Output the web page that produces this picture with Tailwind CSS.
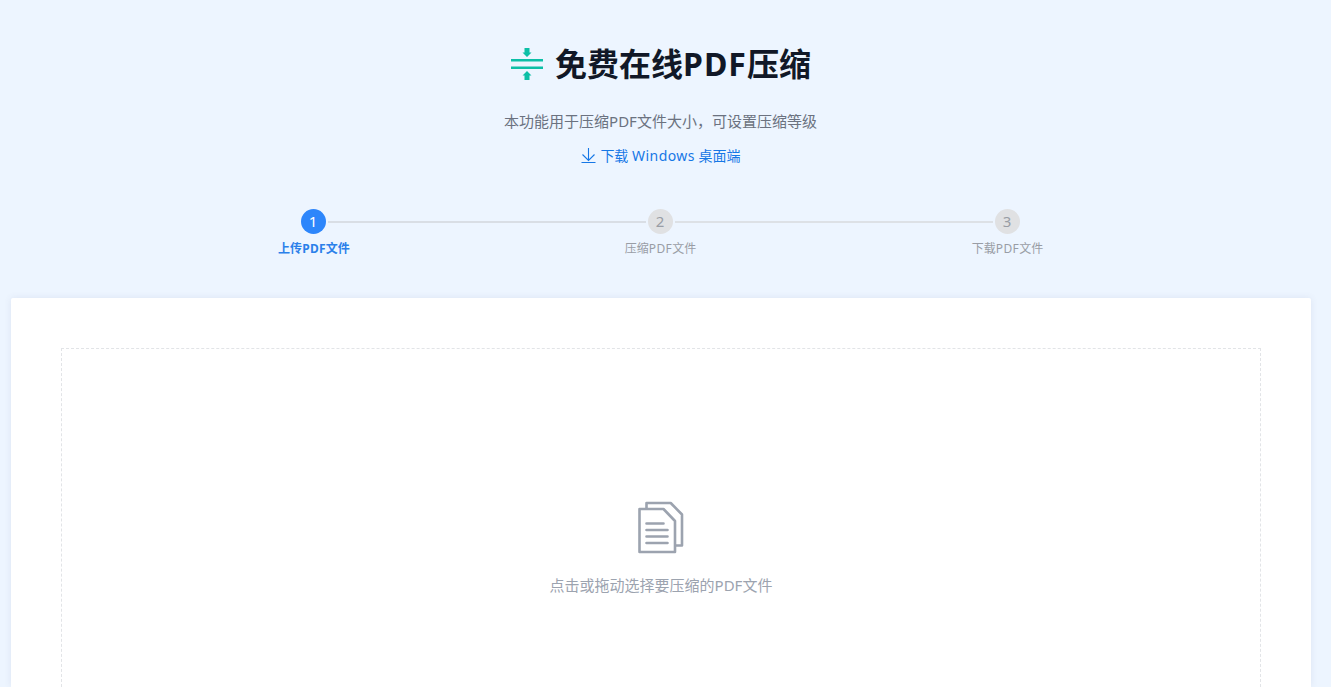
<!DOCTYPE html>
<html lang="zh-CN">
<head>
<meta charset="utf-8">
<title>免费在线PDF压缩</title>
<script src="https://cdn.jsdelivr.net/npm/@tailwindcss/browser@4"></script>
</head>
<body class="h-screen overflow-hidden bg-[#edf5ff] pr-[9px] font-['Noto_Sans','Noto_Sans_CJK_SC',sans-serif]">
<div class="flex h-full flex-col items-center">
  <header class="flex h-[209px] shrink-0 flex-col items-center pt-[44px]">
    <div class="flex h-10 items-center gap-3">
      <svg class="size-8" viewBox="0 0 32 32" fill="#0cbfa6"><path d="M13.5 0h5v4.500H20.500L16 9 11.500 4.500h2zM0 11h32v2.500H0zM0 18.500h32V21H0zM16 23l4.500 4.500h-2V32h-5v-4.500h-2z"/></svg>
      <h1 class="text-[32px] leading-[42px] font-bold whitespace-nowrap text-[#111827]">免费在线<span class="tracking-[1px]">PDF</span>压缩</h1>
    </div>
    <p class="mt-[26px] pr-px text-[15px] leading-[22px] whitespace-nowrap text-[#6b7280]">本功能用于压缩PDF文件大小，可设置压缩等级</p>
    <a class="mt-[13px] flex items-center gap-[4px] text-[14px] leading-[22px] whitespace-nowrap text-[#1677e6]">
      <svg class="h-4 w-[15px]" viewBox="0 0 15 16" fill="none" stroke="#1677e6" stroke-width="1.100"><path d="M7.500 0v12.500M1.500 6.500l6 6 6-6M.5 14.500h14"/></svg>
      <span>下载 <span class="tracking-[0.45px]">Windows</span> 桌面端</span>
    </a>
  </header>
  <div class="mr-[2px] flex h-[89px] w-[1041px] shrink-0 text-center text-[12px] leading-[18px] text-[#999da5]">
    <div class="flex w-[347px] flex-col items-center">
      <div class="flex w-full items-center gap-[2px]"><i class="h-[2px] flex-1"></i><b class="size-[25px] rounded-full bg-[#2d86fb] text-[15px] leading-[25px] font-normal text-white">1</b><i class="h-[2px] flex-1 bg-[#d9dee5]"></i></div>
      <span class="mt-[6px] pl-[2px] font-bold text-[#2b80ea]">上传<span class="tracking-[0.3px]">PDF</span>文件</span>
    </div>
    <div class="flex w-[347px] flex-col items-center">
      <div class="flex w-full items-center gap-[2px]"><i class="h-[2px] flex-1 bg-[#d9dee5]"></i><b class="size-[25px] rounded-full bg-[#e0e1e3] text-[15px] leading-[25px] font-normal">2</b><i class="h-[2px] flex-1 bg-[#dde1e6]"></i></div>
      <span class="mt-[6px] pl-px">压缩<span class="tracking-[0.4px]">PDF</span>文件</span>
    </div>
    <div class="flex w-[347px] flex-col items-center">
      <div class="flex w-full items-center gap-[2px]"><i class="h-[2px] flex-1 bg-[#dde1e6]"></i><b class="size-[25px] rounded-full bg-[#e0e1e3] text-[15px] leading-[25px] font-normal">3</b><i class="h-[2px] flex-1"></i></div>
      <span class="mt-[6px] pl-px">下载<span class="tracking-[0.4px]">PDF</span>文件</span>
    </div>
  </div>
  <main class="min-h-0 w-[1300px] flex-1 rounded-t-[2px] bg-white px-[50px] pt-[50px] shadow-[0_0_7px_rgba(80,80,130,0.1)]">
    <div class="flex h-full flex-col items-center border border-b-0 border-dashed border-[#e2e4e7] pt-[152px]">
      <svg class="mr-px h-[53px] w-[47px]" viewBox="0 0 47 53" fill="none" stroke="#9ca3af" stroke-width="2.600" stroke-linejoin="round" stroke-linecap="round"><path d="M2.500 8h24L38 20v31H2.500zM9.500 7.500V2h24.200L45 13.500v31h-6.500M9.500 22.500h17M9.500 29h21M9.500 35.500h21M9.500 42h21"/></svg>
      <p class="mt-[19px] text-[15px] leading-[24px] whitespace-nowrap text-[#9ca3af]">点击或拖动选择要压缩的PDF文件</p>
    </div>
  </main>
</div>
</body>
</html>
